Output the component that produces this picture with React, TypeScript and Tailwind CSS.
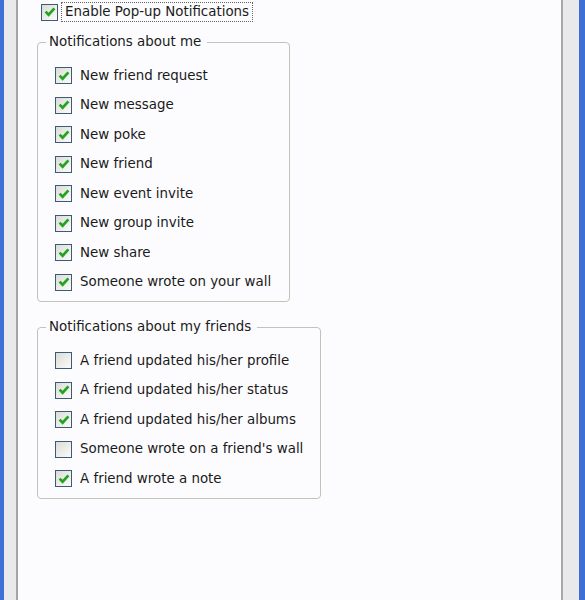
import type { ReactNode } from 'react'

const font = { fontFamily: 'Tahoma, "DejaVu Sans", sans-serif' }

function Box({ checked }: { checked: boolean }) {
  return (
    <div className="w-[17px] h-[17px] shrink-0 border border-[#3d5a78] bg-gradient-to-br from-[#dcdcd6] to-[#fbfbf9] flex items-center justify-center">
      {checked && (
        <svg width="12" height="12" viewBox="0 0 12 12">
          <path d="M1.6 5.6 L4.6 8.7 L10.4 2.4" fill="none" stroke="#22a322" strokeWidth="2.7" />
        </svg>
      )}
    </div>
  )
}

function Row({ label, checked }: { label: string; checked: boolean }) {
  return (
    <div className="h-[29.5px] flex items-center gap-[8px] pl-[9px] whitespace-nowrap">
      <Box checked={checked} />
      <span>{label}</span>
    </div>
  )
}

function Group({ title, width, children }: { title: string; width: string; children: ReactNode }) {
  return (
    <fieldset className={`${width} border border-[#c2c2b8] rounded-[4px] px-[8px] pb-[4px] pt-[1px]`}>
      <legend className="pl-[3px] pr-[6px] leading-[18px] whitespace-nowrap">{title}</legend>
      <div className="pt-[9px]">{children}</div>
    </fieldset>
  )
}

export default function App() {
  const me = [
    'New friend request',
    'New message',
    'New poke',
    'New friend',
    'New event invite',
    'New group invite',
    'New share',
    'Someone wrote on your wall',
  ]
  const friends: [string, boolean][] = [
    ['A friend updated his/her profile', false],
    ['A friend updated his/her status', true],
    ['A friend updated his/her albums', true],
    ["Someone wrote on a friend's wall", false],
    ['A friend wrote a note', true],
  ]

  return (
    <div className="h-[600px] w-[585px] flex overflow-hidden text-[13.4px] text-[#1a1a1a]" style={font}>
      <div className="w-[4px] bg-[#3f6fd6]" />
      <div className="w-[12px] bg-[#e9e9ec]" />
      <div className="w-[2px] bg-[#a3a3a3]" />
      <div className="flex-1 bg-[#fcfcfe] pl-[19px] pt-[2px]">
        <div className="flex items-center gap-[3px] pl-[4px] h-[20px]">
          <Box checked />
          <span className="border border-dotted border-[#666] px-[3px] leading-[18px]">
            Enable Pop-up Notifications
          </span>
        </div>
        <div className="mt-[11px]">
          <Group title="Notifications about me" width="w-[253px]">
            {me.map((m) => (
              <Row key={m} label={m} checked />
            ))}
          </Group>
        </div>
        <div className="mt-[16px]">
          <Group title="Notifications about my friends" width="w-[284px]">
            {friends.map(([l, c]) => (
              <Row key={l} label={l} checked={c} />
            ))}
          </Group>
        </div>
      </div>
      <div className="w-[2px] bg-[#a8a8a8]" />
      <div className="w-[16px] bg-[#e9e9ec]" />
      <div className="w-[6px] bg-[#3f6fd6]" />
    </div>
  )
}
